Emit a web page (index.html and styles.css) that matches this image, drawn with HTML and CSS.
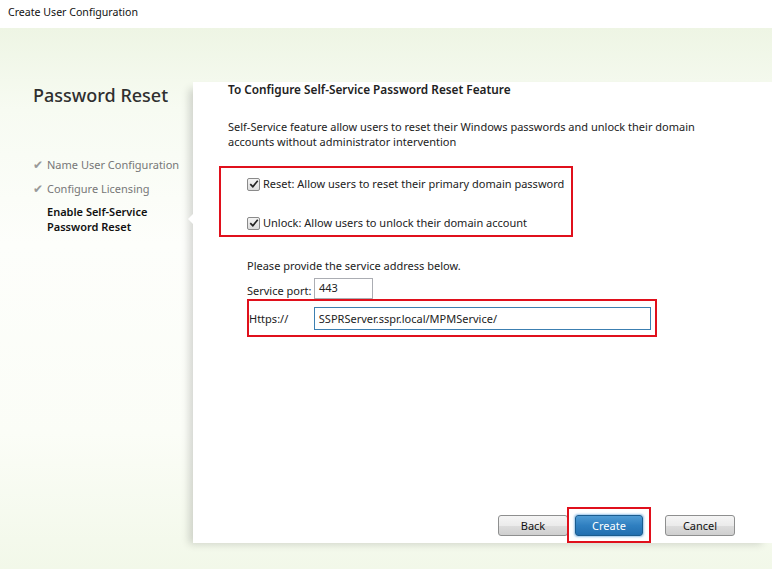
FILE: index.html
```html
<!DOCTYPE html>
<html>
<head>
<meta charset="utf-8">
<link rel="stylesheet" href="styles.css">
</head>
<body>
<div class="window">
  <div class="titlebar">Create User Configuration</div>
  <div class="main">
    <aside class="sidebar">
      <h1 class="side-title">Password Reset</h1>
      <ul class="steps">
        <li class="step done"><span class="tick">✔</span>Name User Configuration</li>
        <li class="step done"><span class="tick">✔</span>Configure Licensing</li>
        <li class="step current"><span class="tick"></span>Enable Self-Service<br>Password Reset</li>
      </ul>
    </aside>
    <section class="panel">
      <span class="notch"></span>
      <h2 class="heading">To Configure Self-Service Password Reset Feature</h2>
      <p class="desc">Self-Service feature allow users to reset their Windows passwords and unlock their domain accounts without administrator intervention</p>
      <div class="hl hl-checks">
        <label class="check"><span class="box"><svg viewBox="0 0 12 12" width="10" height="10"><path d="M1.5 6.2 L4.6 9.2 L10.5 2.2" fill="none" stroke="#222" stroke-width="2"/></svg></span>Reset: Allow users to reset their primary domain password</label>
        <label class="check"><span class="box"><svg viewBox="0 0 12 12" width="10" height="10"><path d="M1.5 6.2 L4.6 9.2 L10.5 2.2" fill="none" stroke="#222" stroke-width="2"/></svg></span>Unlock: Allow users to unlock their domain account</label>
      </div>
      <p class="provide">Please provide the service address below.</p>
      <div class="port-row">
        <span class="lbl port-lbl">Service port:</span>
        <span class="input port">443</span>
      </div>
      <div class="hl hl-url">
        <span class="lbl https">Https://</span>
        <span class="input url">SSPRServer.sspr.local/MPMService/</span>
      </div>
      <div class="buttons">
        <button class="btn">Back</button>
        <span class="hl hl-btn"><button class="btn primary">Create</button></span>
        <button class="btn">Cancel</button>
      </div>
    </section>
  </div>
</div>
</body>
</html>
```

FILE: styles.css
```css
* { box-sizing: border-box; }
html, body { margin: 0; padding: 0; }
body {
  width: 772px;
  height: 569px;
  overflow: hidden;
  font-family: "Noto Sans", "Open Sans", sans-serif;
  font-size: 11px;
  color: #222;
}
.window {
  height: 569px;
  display: flex;
  flex-direction: column;
  background: #fff;
}
.titlebar {
  height: 28px;
  padding: 5px 0 0 8px;
  font-size: 10.6px;
  color: #111;
  background: #fff;
}
.main {
  flex: 1;
  display: flex;
  background: linear-gradient(180deg, #eef5e4 0%, #f7fbf2 15%, #fdfefb 40%, #fbfdf7 75%, #f2f8e9 100%);
}
.sidebar {
  width: 193px;
  flex: none;
  padding: 55px 0 0 33px;
}
.side-title {
  margin: 0;
  font-size: 18px;
  font-weight: 500;
  color: #2f2f2f;
  line-height: 25px;
}
.steps {
  list-style: none;
  margin: 49px 0 0;
  padding: 0;
}
.step {
  display: flex;
  font-size: 11px;
  line-height: 15px;
  margin-bottom: 9px;
  color: #777;
}
.step .tick {
  width: 14px;
  flex: none;
  color: #999;
  font-size: 11.5px;
}
.step.current {
  color: #111;
  font-weight: 600;
  margin-top: -1px;
}
.panel {
  position: relative;
  flex: 1;
  margin: 54px 0 26px 0;
  padding: 0 0 0 35px;
  background: #fff;
  box-shadow: -7px 4px 8px -3px rgba(0,0,0,0.16);
  display: flex;
  flex-direction: column;
}
.notch {
  position: absolute;
  left: -5px;
  top: 131px;
  width: 0;
  height: 0;
  border-top: 6px solid transparent;
  border-bottom: 6px solid transparent;
  border-right: 6px solid #fff;
}
.heading {
  margin: 0;
  font-size: 11.8px;
  font-weight: 600;
  color: #222;
  line-height: 15px;
}
.desc {
  margin: 22px 0 0;
  width: 475px;
  font-size: 11px;
  line-height: 15px;
}
.hl {
  border: 2px solid #e0101c;
}
.hl-checks {
  margin: 17px 0 0 -9px;
  width: 354px;
  height: 71px;
  padding: 8px 0 0 26px;
  display: flex;
  flex-direction: column;
  gap: 23px;
}
.check {
  display: flex;
  align-items: center;
  font-size: 11px;
  line-height: 16px;
  white-space: nowrap;
}
.box {
  width: 13px;
  height: 13px;
  margin-right: 3px;
  border: 1px solid #8a8a8a;
  border-radius: 2px;
  background: linear-gradient(#f4f4f4, #dcdcdc);
  display: flex;
  align-items: center;
  justify-content: center;
}
.provide {
  margin: 21px 0 0 19px;
  font-size: 11px;
  line-height: 15px;
}
.port-row {
  margin: 5px 0 0 19px;
  display: flex;
  align-items: flex-end;
  height: 21px;
}
.lbl {
  font-size: 11px;
  line-height: 15px;
}
.port-lbl {
  width: 67px;
  padding-bottom: 1px;
}
.input {
  display: block;
  border: 1px solid #abadb3;
  background: #fff;
  font-size: 11px;
  line-height: 15px;
  padding: 1px 4px;
}
.port {
  width: 59px;
  height: 21px;
  padding-top: 1px;
}
.hl-url {
  margin: 0 0 0 19px;
  width: 410px;
  height: 38px;
  display: flex;
  align-items: center;
  padding: 0 4px 0 0;
}
.https {
  width: 65px;
  margin-left: 0;
}
.url {
  width: 338px;
  height: 23px;
  border-color: #3c7fb1;
  padding: 3px 4px;
}
.buttons {
  margin-top: auto;
  margin-bottom: 0;
  margin-left: 270px;
  display: flex;
  align-items: center;
}
.btn {
  font-family: inherit;
  font-size: 11px;
  height: 21px;
  padding: 0;
  border: 1px solid #8e8f8f;
  border-radius: 3px;
  background: linear-gradient(#f5f5f5 0%, #ebebeb 50%, #dddddd 51%, #cfcfcf 100%);
  color: #111;
  width: 70px;
}
.btn.primary {
  width: 68px;
  border-color: #1b5c8e;
  color: #fff;
  background: linear-gradient(#4f9bd4 0%, #2f7fc0 50%, #226fb0 100%);
  box-shadow: 0 0 2px 1px rgba(90,160,220,0.6);
}
.hl-btn {
  display: flex;
  align-items: center;
  justify-content: center;
  width: 84px;
  height: 36px;
  margin-left: -1px;
  margin-right: 14px;
}
```
